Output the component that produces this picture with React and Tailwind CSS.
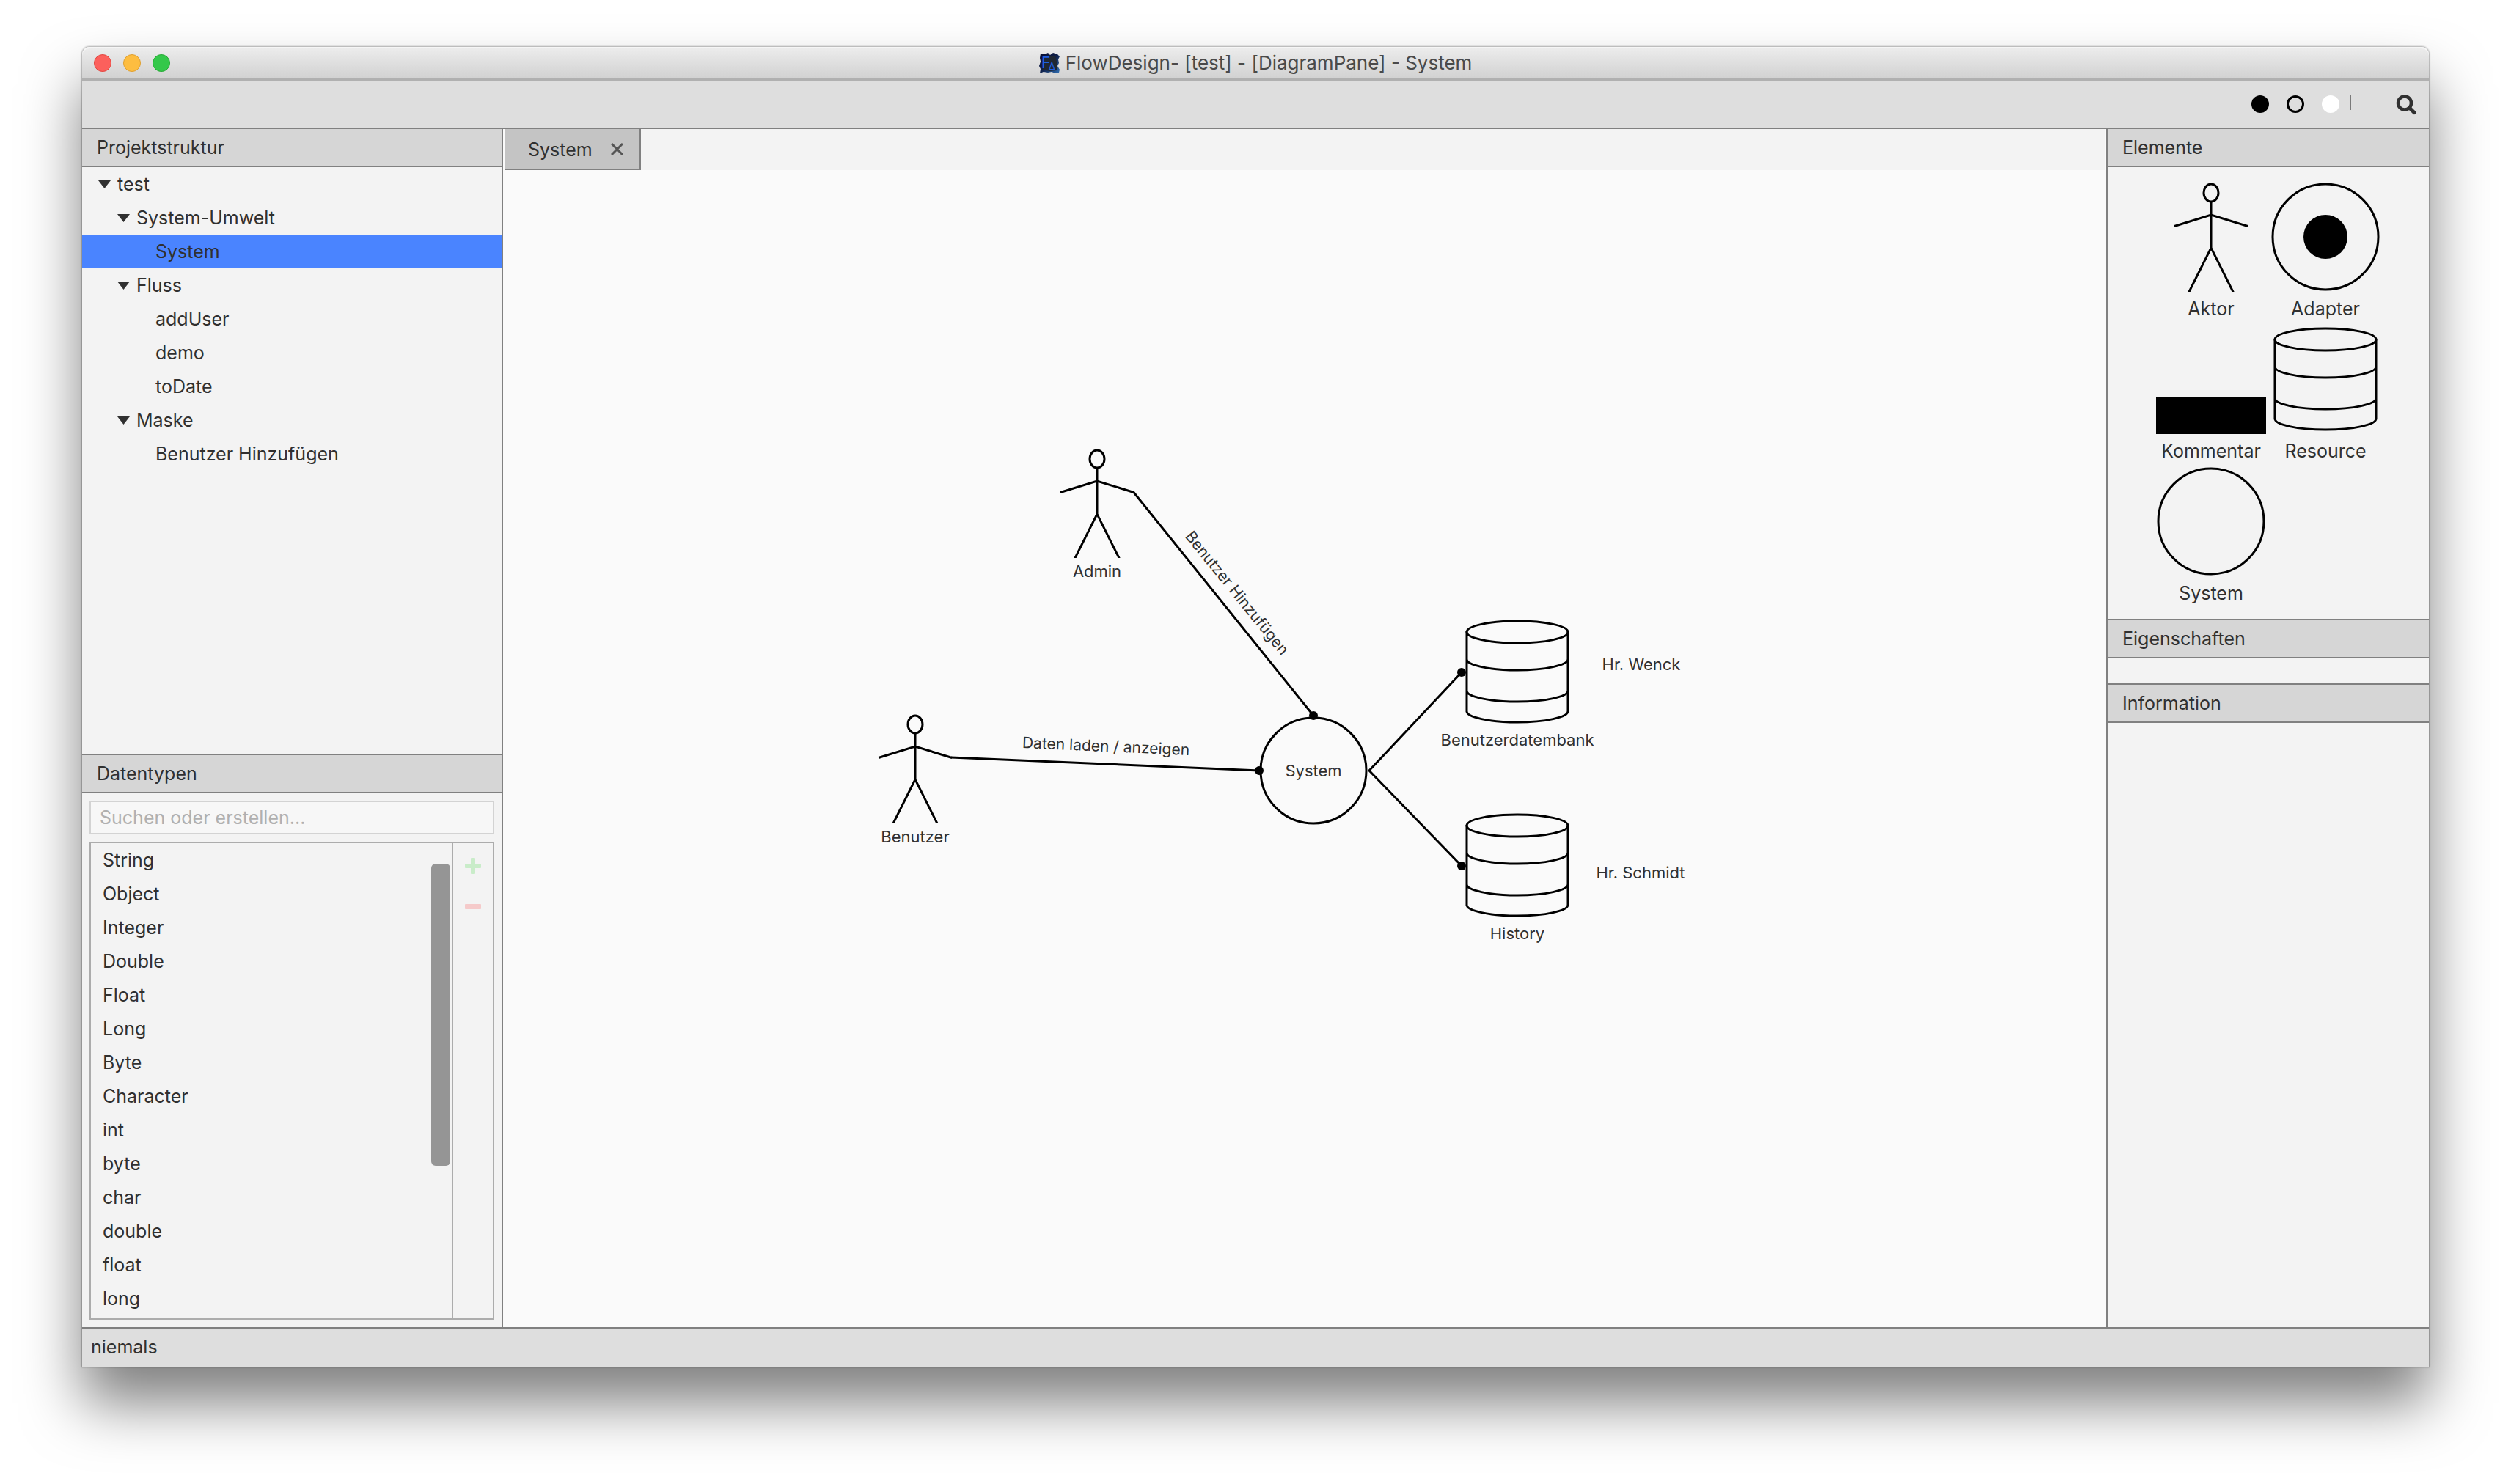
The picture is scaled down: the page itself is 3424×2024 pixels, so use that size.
const TREE = [
  { label: 'test', level: 0, open: true },
  { label: 'System-Umwelt', level: 1, open: true },
  { label: 'System', level: 2, selected: true },
  { label: 'Fluss', level: 1, open: true },
  { label: 'addUser', level: 2 },
  { label: 'demo', level: 2 },
  { label: 'toDate', level: 2 },
  { label: 'Maske', level: 1, open: true },
  { label: 'Benutzer Hinzufügen', level: 2 },
];

const INDENT = ['pl-[22px]', 'pl-[48px]', 'pl-[74px]'];

const TYPES = [
  'String', 'Object', 'Integer', 'Double', 'Float', 'Long', 'Byte',
  'Character', 'int', 'byte', 'char', 'double', 'float', 'long',
];

const shape = { width: 150, height: 150, viewBox: '0 0 150 150', fill: 'none', stroke: '#000', strokeWidth: 3, 'aria-hidden': true };

function Actor() {
  return (
    <svg {...shape}>
      <ellipse cx="75" cy="15" rx="10" ry="12" />
      <path d="M75 27V90M25 60.5L75 45L125 60.5M44.5 151L75 90L105.5 151" />
    </svg>
  );
}

function Adapter() {
  return (
    <svg {...shape}>
      <circle cx="75" cy="75" r="72" />
      <circle cx="75" cy="75" r="30" fill="#000" stroke="none" />
    </svg>
  );
}

function Resource() {
  return (
    <svg {...shape}>
      <ellipse cx="75" cy="21" rx="69" ry="15" />
      <path d="M6 20V130M144 20V130M6 58A69 15 0 0 0 144 58M6 101A69 15 0 0 0 144 101M6 129A69 15 0 0 0 144 129" />
    </svg>
  );
}

function Circle() {
  return (
    <svg {...shape}>
      <circle cx="75" cy="75" r="72" />
    </svg>
  );
}

function Comment() {
  return <span className="h-[50px] w-[150px] bg-black" />;
}

function PanelHeader({ children, first }) {
  return (
    <h2 className={`border-b-2 border-[#808080] bg-[#d6d6d6] pl-5 leading-[50px] ${first ? '' : 'border-t-2'}`}>
      {children}
    </h2>
  );
}

function PaletteItem({ label, children }) {
  return (
    <button type="button" className="flex h-[194px] w-[150px] flex-col items-center justify-end">
      {children}
      <span className="h-[44px] leading-[46px]">{label}</span>
    </button>
  );
}

function Node({ place, label, children }) {
  return (
    <div className={`absolute flex w-[150px] flex-col items-center ${place}`}>
      {children}
      <span className="leading-9 whitespace-nowrap">{label}</span>
    </div>
  );
}

function Logo() {
  return (
    <svg width="28" height="28" viewBox="0 0 28 28" aria-hidden="true">
      <defs>
        <linearGradient id="tile" x1="0" y1="0" x2="1" y2="1">
          <stop offset="0" stopColor="#050a2e" />
          <stop offset="0.5" stopColor="#10204a" />
          <stop offset="1" stopColor="#2f6fb5" />
        </linearGradient>
      </defs>
      <path d="M2 1L8 2L12 0L15 3L19 0L25 2L28 5L26 9L27 14L25 18L28 23L27 27L22 28L17 26L12 27L6 26L1 28L2 22L0 18L2 12L1 7Z" fill="url(#tile)" />
      <path d="M5 5L22 4L24 12L24 24L14 25L5 23L4 14Z" fill="#1f2733" />
      <text x="3" y="21" fontSize="21" fill="#1f5fe0">F</text>
      <text x="13" y="23" fontSize="13" fill="#1f5fe0">Δ</text>
    </svg>
  );
}

function TitleBar() {
  return (
    <header className="grid h-[46px] grid-cols-[1fr_auto_1fr] items-center rounded-t-[10px] border-b-4 border-[#b0b0b0] bg-linear-to-b from-[#ededed] to-[#d2d2d2] px-4 pt-0.5 shadow-[inset_0_2px_0_#f6f6f6]">
      <div className="flex gap-4">
        <button type="button" aria-label="Schließen" className="size-6 rounded-full border border-[#e2463f] bg-[#fc605c]" />
        <button type="button" aria-label="Minimieren" className="size-6 rounded-full border border-[#dfa133] bg-[#fdbd40]" />
        <button type="button" aria-label="Vergrößern" className="size-6 rounded-full border border-[#27aa35] bg-[#34c84a]" />
      </div>
      <h1 className="flex items-center gap-2 text-[26px] leading-10 text-[#4a4a4a]">
        <Logo />
        FlowDesign- [test] - [DiagramPane] - System
      </h1>
    </header>
  );
}

function Toolbar() {
  return (
    <div className="flex h-[66px] items-center justify-end border-b-2 border-[#808080] bg-[#dedede] pr-4">
      <div className="flex gap-6">
        <button type="button" aria-label="Schwarz" className="size-6 rounded-full bg-black" />
        <button type="button" aria-label="Umriss" className="size-6 rounded-full border-[3px] border-black" />
        <button type="button" aria-label="Weiß" className="size-6 rounded-full bg-white" />
      </div>
      <span className="mr-[60px] mb-1 ml-[14px] h-5 w-0.5 bg-[#7a7a7a]" />
      <button type="button" aria-label="Suchen">
        <svg width="30" height="30" viewBox="0 0 30 30" fill="none" stroke="#303030" strokeWidth="4.5" strokeLinecap="round" aria-hidden="true">
          <circle cx="13" cy="13.5" r="9" />
          <path d="M20 20.5L26 26.5" strokeWidth="5" />
        </svg>
      </button>
    </div>
  );
}

function ProjectTree() {
  return (
    <ul className="flex-1">
      {TREE.map((n) => (
        <li key={n.label}>
          <button
            type="button"
            className={`flex w-full items-center gap-[9px] leading-[46px] ${INDENT[n.level]} ${n.selected ? 'bg-[#4a84ff]' : ''}`}
          >
            <svg width="17" height="11" viewBox="0 0 17 11" aria-hidden="true">
              {n.open && <path d="M0 0H17L8.500 11Z" fill="#303030" />}
            </svg>
            {n.label}
          </button>
        </li>
      ))}
    </ul>
  );
}

function DataTypes() {
  return (
    <section>
      <PanelHeader>Datentypen</PanelHeader>
      <div className="flex flex-col gap-[10px] p-[10px]">
        <input
          type="text"
          aria-label="Datentyp suchen oder erstellen"
          placeholder="Suchen oder erstellen..."
          className="h-[46px] w-full border-2 border-[#d3d3d3] bg-[#f7f7f7] px-3 placeholder:text-[#b0b0b0]"
        />
        <div className="flex border-2 border-[#acacac]">
          <ul className="flex-1 pb-1 pl-4">
            {TYPES.map((t) => (
              <li key={t} className="leading-[46px]">{t}</li>
            ))}
          </ul>
          <div className="mr-0.5 pt-7">
            <div className="h-[412px] w-[26px] rounded-md bg-[#959595]" />
          </div>
          <div className="flex w-14 flex-col items-center border-l-2 border-[#acacac]">
            <button type="button" aria-label="Hinzufügen" className="flex h-[62px] items-center">
              <svg width="22" height="22" viewBox="0 0 22 22" aria-hidden="true">
                <path d="M9 0H13Q14 0 14 1V8H21Q22 8 22 9V13Q22 14 21 14H14V21Q14 22 13 22H9Q8 22 8 21V14H1Q0 14 0 13V9Q0 8 1 8H8V1Q8 0 9 0Z" fill="#c9ecc9" />
              </svg>
            </button>
            <button type="button" aria-label="Entfernen" className="flex h-12 items-center">
              <svg width="22" height="7" viewBox="0 0 22 7" aria-hidden="true">
                <rect width="22" height="7" rx="1" fill="#f5caca" />
              </svg>
            </button>
          </div>
        </div>
      </div>
    </section>
  );
}

function Diagram() {
  return (
    <div className="relative flex-1 text-[22px]">
      <svg className="absolute inset-0 size-full" stroke="#000" strokeWidth="3" aria-label="Verbindungen">
        <path d="M860 439.500L1105 744M611 801L1031 819M1307 685L1181 819L1307 949" fill="none" />
        <g stroke="none">
          <circle cx="1105" cy="744" r="6" />
          <circle cx="1031" cy="819" r="6" />
          <circle cx="1307" cy="685" r="6" />
          <circle cx="1307" cy="949" r="6" />
        </g>
        <g stroke="none" fill="#303030" fontSize="21" textAnchor="middle">
          <text transform="translate(982 592) rotate(51)" y="-17">Benutzer Hinzufügen</text>
          <text transform="translate(821 810) rotate(2.5)" y="-17">Daten laden / anzeigen</text>
        </g>
      </svg>
      <Node place="left-[735px] top-[379px]" label="Admin"><Actor /></Node>
      <Node place="left-[487px] top-[741px]" label="Benutzer"><Actor /></Node>
      <div className="absolute top-[744px] left-[1030px] grid place-items-center">
        <div className="col-start-1 row-start-1"><Circle /></div>
        <span className="col-start-1 row-start-1 leading-9">System</span>
      </div>
      <Node place="left-[1308px] top-[609px]" label="Benutzerdatembank"><Resource /></Node>
      <Node place="left-[1308px] top-[873px]" label="History"><Resource /></Node>
      <Node place="left-[1477px] top-[656px]" label="Hr. Wenck" />
      <Node place="left-[1476px] top-[940px]" label="Hr. Schmidt" />
    </div>
  );
}

export default function App() {
  return (
    <div className="flex min-h-screen flex-col bg-white px-28 pt-16 pb-40 font-['Inter',sans-serif] text-[25px] text-[#303030]">
      <div className="flex flex-1 flex-col rounded-t-[10px] shadow-[0_0_2px_1px_rgba(0,0,0,0.3),0_50px_80px_rgba(0,0,0,0.5)]">
        <TitleBar />
        <Toolbar />
        <div className="flex flex-1 bg-[#f3f3f3]">
          <aside className="flex w-[574px] flex-col border-r-2 border-[#808080]">
            <PanelHeader first>Projektstruktur</PanelHeader>
            <ProjectTree />
            <DataTypes />
          </aside>
          <main className="flex flex-1 flex-col bg-[#fafafa]">
            <div className="mx-0.5 flex bg-[#f3f3f3]">
              <div className="flex h-14 items-center gap-[25px] border-r-2 border-b-2 border-[#808080] bg-[#c4c4c4] pr-[22px] pl-8">
                <span className="pt-1">System</span>
                <button type="button" aria-label="Tab schließen">
                  <svg width="17" height="17" viewBox="0 0 17 17" fill="none" stroke="#555" strokeWidth="3" aria-hidden="true">
                    <path d="M1 1L16 16M16 1L1 16" />
                  </svg>
                </button>
              </div>
            </div>
            <Diagram />
          </main>
          <aside className="w-[440px] border-l-2 border-[#808080]">
            <PanelHeader first>Elemente</PanelHeader>
            <div className="grid grid-cols-[150px_150px] justify-center gap-x-1.5 pt-5 pb-[14px]">
              <PaletteItem label="Aktor"><Actor /></PaletteItem>
              <PaletteItem label="Adapter"><Adapter /></PaletteItem>
              <PaletteItem label="Kommentar"><Comment /></PaletteItem>
              <PaletteItem label="Resource"><Resource /></PaletteItem>
              <PaletteItem label="System"><Circle /></PaletteItem>
            </div>
            <PanelHeader>Eigenschaften</PanelHeader>
            <div className="h-[34px]" />
            <PanelHeader>Information</PanelHeader>
          </aside>
        </div>
        <footer className="border-t-2 border-[#808080] bg-[#dedede] pb-0.5 pl-3 leading-[50px]">niemals</footer>
      </div>
    </div>
  );
}
